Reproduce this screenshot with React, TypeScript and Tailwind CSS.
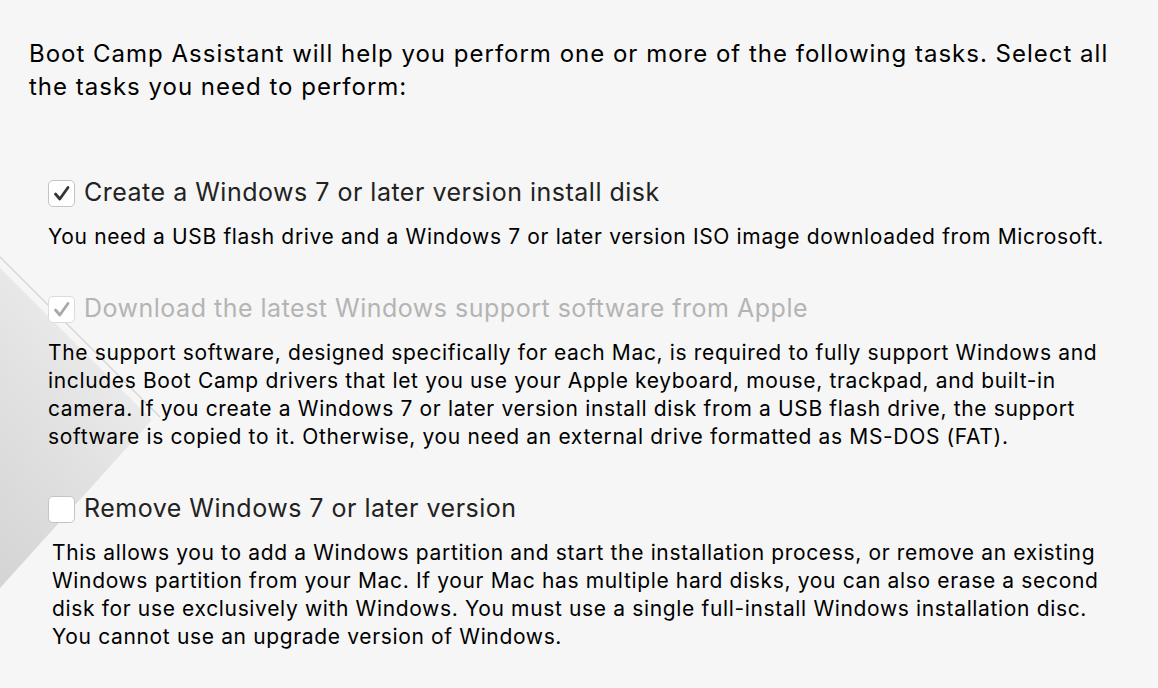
import React from 'react';

type Task = {
  label: string;
  checked: boolean;
  disabled?: boolean;
  lines: string[];
  indent?: boolean;
};

const TASKS: Task[] = [
  {
    label: 'Create a Windows 7 or later version install disk',
    checked: true,
    lines: ['You need a USB flash drive and a Windows 7 or later version ISO image downloaded from Microsoft.'],
  },
  {
    label: 'Download the latest Windows support software from Apple',
    checked: true,
    disabled: true,
    lines: [
      'The support software, designed specifically for each Mac, is required to fully support Windows and',
      'includes Boot Camp drivers that let you use your Apple keyboard, mouse, trackpad, and built-in',
      'camera. If you create a Windows 7 or later version install disk from a USB flash drive, the support',
      'software is copied to it. Otherwise, you need an external drive formatted as MS-DOS (FAT).',
    ],
  },
  {
    label: 'Remove Windows 7 or later version',
    checked: false,
    indent: true,
    lines: [
      'This allows you to add a Windows partition and start the installation process, or remove an existing',
      'Windows partition from your Mac. If your Mac has multiple hard disks, you can also erase a second',
      'disk for use exclusively with Windows. You must use a single full-install Windows installation disc.',
      'You cannot use an upgrade version of Windows.',
    ],
  },
];

function Checkbox({ checked, disabled }: { checked: boolean; disabled?: boolean }) {
  return (
    <div
      className={`flex h-[27px] w-[27px] shrink-0 items-center justify-center rounded-[5px] border bg-white ${
        disabled ? 'border-[#dcdcdc]' : 'border-[#c4c4c4]'
      }`}
    >
      {checked && (
        <svg width="18" height="17" viewBox="0 0 18 17">
          <path
            d="M2.5 9 L6.8 14 L15 2.5"
            fill="none"
            stroke={disabled ? '#a8a8a8' : '#353535'}
            strokeWidth="2.8"
            strokeLinecap="round"
            strokeLinejoin="round"
          />
        </svg>
      )}
    </div>
  );
}

// faded corner of the Boot Camp disk icon behind the task list
function Watermark() {
  return (
    <svg className="pointer-events-none absolute left-0 top-0" width="200" height="688" viewBox="0 0 200 688">
      <defs>
        <linearGradient id="wm" x1="0.6" y1="0" x2="0" y2="1">
          <stop offset="0" stopColor="#efefef" />
          <stop offset="0.45" stopColor="#e2e2e2" />
          <stop offset="1" stopColor="#d4d4d4" />
        </linearGradient>
      </defs>
      <polygon points="0,268 152,420 0,588" fill="url(#wm)" />
      <line x1="0" y1="257" x2="160" y2="417" stroke="#d6d6d6" strokeWidth="1.5" />
    </svg>
  );
}

export default function App() {
  return (
    <div
      className="relative h-[688px] w-[1158px] overflow-hidden bg-[#f6f6f6] text-black"
      style={{ fontFamily: 'Inter, "Liberation Sans", Arial, sans-serif' }}
    >
      <Watermark />
      <div className="relative pl-[29px] pt-[37px]">
        <p className="text-[24px] leading-[33px] tracking-[1px]">
          Boot Camp Assistant will help you perform one or more of the following tasks. Select all
          <br />
          the tasks you need to perform:
        </p>

        <div className="mt-[76px] flex flex-col gap-[44px] pl-[19px]">
          {TASKS.map((task) => (
            <div key={task.label} className="flex flex-col gap-[16px]">
              <div className="flex h-[28px] items-center gap-[9px]">
                <Checkbox checked={task.checked} disabled={task.disabled} />
                <span
                  className={`whitespace-nowrap text-[25px] tracking-[0.5px] ${
                    task.disabled ? 'text-[#b4b4b4]' : 'text-[#222]'
                  }`}
                >
                  {task.label}
                </span>
              </div>
              <div
                className={`text-[21px] leading-[28px] tracking-[0.65px] ${task.indent ? 'pl-[4px]' : ''}`}
              >
                {task.lines.map((line) => (
                  <div key={line} className="whitespace-nowrap">
                    {line}
                  </div>
                ))}
              </div>
            </div>
          ))}
        </div>
      </div>
    </div>
  );
}
